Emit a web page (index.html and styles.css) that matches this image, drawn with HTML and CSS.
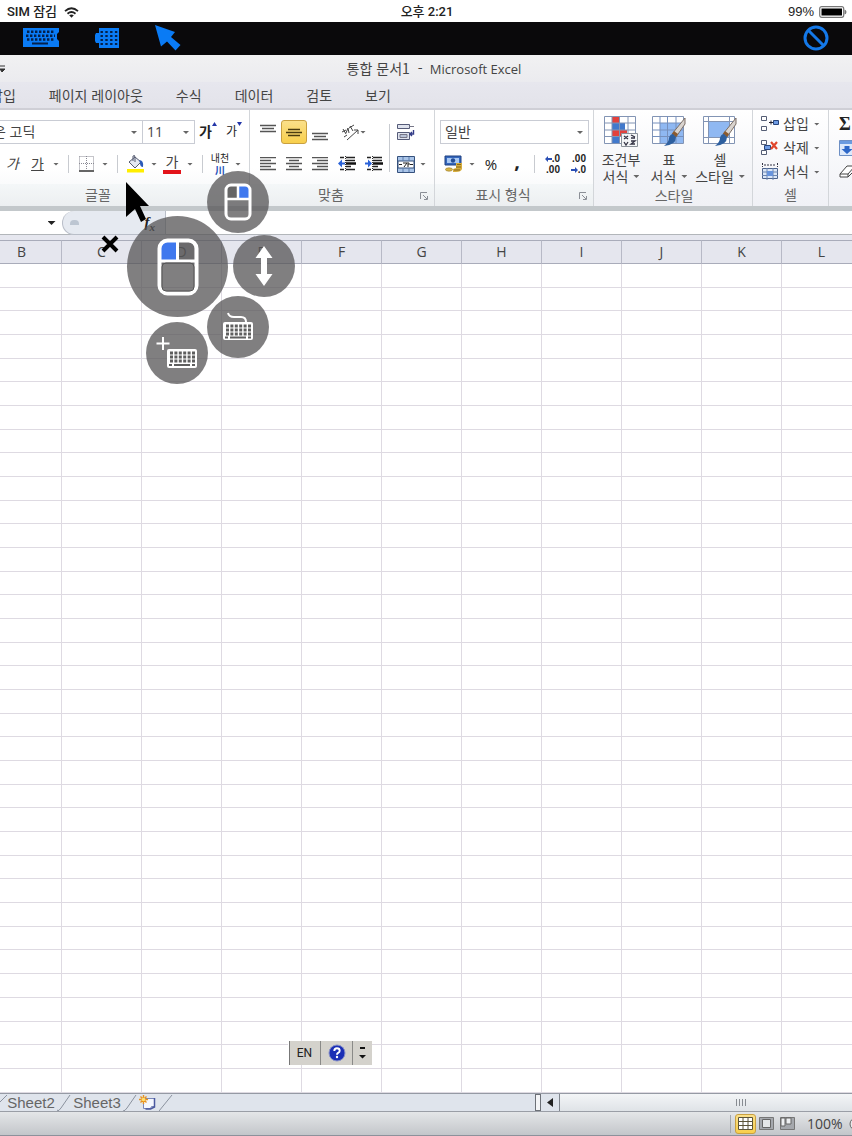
FILE: index.html
```html
<!DOCTYPE html>
<html lang="ko">
<head>
<meta charset="utf-8">
<meta name="viewport" content="width=device-width, initial-scale=1">
<title>통합 문서1 - Microsoft Excel</title>
<link rel="stylesheet" href="styles.css">
</head>
<body>
<header class="device">
  <div class="device-left"><span>SIM 잠김</span>
    <svg width="15" height="11" viewBox="0 0 15 11" fill="none" stroke="#222" stroke-width="1.8"><path d="M1 4.2Q7.500-1.600 14 4.200M3.500 6.700Q7.500 3.200 11.500 6.700"/><path d="M5.200 8.300Q7.500 6.500 9.800 8.300L7.500 10.800Z" fill="#222" stroke="none"/></svg>
  </div>
  <div class="clock">오후 2:21</div>
  <div class="device-right"><span>99%</span>
    <svg width="28" height="12" viewBox="0 0 28 12"><rect x=".7" y=".7" width="24" height="10.600" rx="2" fill="#fff" stroke="#777" stroke-width="1.200"/><rect x="2.500" y="2.500" width="20.500" height="7" fill="#000"/><path d="M25.500 3.500q2 .5 2 2.500t-2 2.500z" fill="#777"/></svg>
  </div>
</header>

<nav class="remote">
  <button aria-label="키보드"><svg width="37" height="21" viewBox="0 0 37 21"><path fill="#0a7bf5" d="M0 1h36v4l-2 2v5l2 2v6H0z"/><path stroke="#04204a" stroke-width="2.400" stroke-dasharray="2.400 1.600" d="M4 4.800h28M3 8.800h29M4 12.500h28"/><path stroke="#04204a" stroke-width="2" d="M9 16.500h16"/></svg></button>
  <button aria-label="숫자 키패드"><svg width="25" height="22" viewBox="0 0 25 22"><path fill="#0a7bf5" d="M4 1h20v20H4v-5H1l-1-2V8l1-2h3z"/><path stroke="#04204a" stroke-width="2.200" stroke-dasharray="2.400 2.400" d="M5.500 5h17M5.500 9h17M5.500 13h17M5.500 17h17"/></svg></button>
  <button aria-label="포인터"><svg width="26" height="26" viewBox="0 0 26 26"><path fill="#0a7bf5" d="M0 0l20 7-4 5 9.500 8-5 5.500-8.500-9-6 5z"/></svg></button>
  <button class="stop" aria-label="중지"><svg width="26" height="26" viewBox="0 0 26 26" fill="none" stroke="#1478e8" stroke-width="3"><circle cx="13" cy="13" r="11"/><path d="M5 5l16 16"/></svg></button>
</nav>

<section class="titlebar">
  <svg class="quick" width="6" height="8" viewBox="0 0 6 8"><path d="M0 1h5M0 4h5L2 7z" stroke="#333" fill="#333"/></svg>
  <h1>통합 문서1 &nbsp;- <span class="latin">&nbsp;Microsoft Excel</span></h1>
</section>
<nav class="tabs">
  <button class="tab cut">삽입</button>
  <button class="tab">페이지 레이아웃</button>
  <button class="tab">수식</button>
  <button class="tab">데이터</button>
  <button class="tab">검토</button>
  <button class="tab">보기</button>
</nav>

<section class="ribbon">
  <div class="group font-group">
    <div class="body">
      <div class="row">
        <label class="combo face"><select aria-label="글꼴"><option>은 고딕</option></select><i class="caret"></i></label>
        <label class="combo size"><select aria-label="글꼴 크기"><option>11</option></select><i class="caret"></i></label>
        <button class="tool grow" aria-label="글꼴 크게"><b>가</b><svg width="5" height="4" viewBox="0 0 5 4"><path d="M0 4L2.500 0 5 4z" fill="#2336a8"/></svg></button>
        <button class="tool shrink" aria-label="글꼴 작게">가<svg width="5" height="4" viewBox="0 0 5 4"><path d="M0 0h5L2.500 4z" fill="#2336a8"/></svg></button>
      </div>
      <div class="row font-tools">
        <button class="tool"><em>가</em></button>
        <button class="tool"><u>가</u></button><i class="caret"></i><i class="sep"></i>
        <button class="tool" aria-label="테두리"><svg width="15" height="16" viewBox="0 0 15 16" fill="none" stroke="#8a8a94"><path stroke-dasharray="1 1" d="M.5.500h14v13M.5.500v13M7.500 0v14M0 7.500h15"/><path stroke="#333" stroke-width="1.500" d="M0 15h15"/></svg></button><i class="caret"></i><i class="sep"></i>
        <button class="tool" aria-label="채우기 색"><svg width="19" height="18" viewBox="0 0 19 18"><path d="M3 7l6-5 6 5-6 6z" fill="#e4e8f2" stroke="#555a70"/><path d="M7 6V1q2-2 2 2v4" fill="none" stroke="#555a70"/><path d="M13 5q5 0 4 7-3 0-3-4z" fill="#2b5ab8"/><path d="M1 14h17v3.500H1z" fill="#ffee00"/></svg></button><i class="caret"></i>
        <button class="tool colour">가</button><i class="caret"></i><i class="sep"></i>
        <button class="tool ruby"><span>내천</span><span class="hanja">川</span></button><i class="caret"></i>
      </div>
    </div>
    <div class="label font-label">글꼴</div>
  </div>

  <div class="group align-group">
    <div class="body split">
      <div class="stack">
        <div class="row align-top">
          <button class="tool" aria-label="위쪽 맞춤"><svg width="16" height="18" viewBox="0 0 16 18" stroke="#555" stroke-width="1.300"><path d="M0 2.500h16M2 5.500h12M0 8.500h16"/></svg></button>
          <button class="tool on" aria-label="가운데 맞춤"><svg width="16" height="18" viewBox="0 0 16 18" stroke="#4c3d10" stroke-width="1.300"><path d="M2 6.500h12M0 9.500h16M2 12.500h12"/></svg></button>
          <button class="tool" aria-label="아래쪽 맞춤"><svg width="16" height="18" viewBox="0 0 16 18" stroke="#555" stroke-width="1.300"><path d="M0 10.500h16M2 13.500h12M0 16.500h16"/></svg></button>
          <button class="tool orient" aria-label="방향"><svg width="19" height="17" viewBox="0 0 19 17" fill="none" stroke="#444"><path d="M6 16L17 6M13 6h4v4M1 8l4-2M2 5l3 5M5 9l2-5M7 4l1 5M8 4l5-3M9 2l3 5M6 11l-3 2"/></svg><i class="caret"></i></button>
        </div>
        <div class="row align-bottom">
          <button class="tool" aria-label="왼쪽"><svg width="16" height="14" viewBox="0 0 16 14" stroke="#555" stroke-width="1.300"><path d="M0 .5h16M0 3.500h11M0 6.500h16M0 9.500h11M0 12.500h16"/></svg></button>
          <button class="tool" aria-label="가운데"><svg width="16" height="14" viewBox="0 0 16 14" stroke="#555" stroke-width="1.300"><path d="M0 .5h16M3 3.500h10M0 6.500h16M3 9.500h10M0 12.500h16"/></svg></button>
          <button class="tool" aria-label="오른쪽"><svg width="16" height="14" viewBox="0 0 16 14" stroke="#555" stroke-width="1.300"><path d="M0 .5h16M5 3.500h11M0 6.500h16M5 9.500h11M0 12.500h16"/></svg></button>
          <button class="tool" aria-label="내어쓰기"><svg width="18" height="16" viewBox="0 0 18 16"><path stroke="#222" stroke-width="1.300" d="M2 1.500h4M8 1.500h9M8 4.500h9M8 10.500h5M2 13.500h4M8 13.500h9"/><path stroke="#111" stroke-width="2.500" d="M8 7.500h10"/><path d="M0 7.500l4-4v3h3v2H4v3z" fill="#2a62d8"/><path stroke="#333" stroke-dasharray="1 1" d="M7.500 0v16"/></svg></button>
          <button class="tool" aria-label="들여쓰기"><svg width="18" height="16" viewBox="0 0 18 16"><path stroke="#222" stroke-width="1.300" d="M2 1.500h4M8 1.500h9M8 4.500h9M8 10.500h5M2 13.500h4M8 13.500h9"/><path stroke="#111" stroke-width="2.500" d="M8 7.500h10"/><path d="M7 7.500l-4-4v3H0v2h3v3z" fill="#2a62d8"/><path stroke="#333" stroke-dasharray="1 1" d="M7.500 0v16"/></svg></button>
        </div>
      </div>
      <i class="sep tall"></i>
      <div class="stack">
        <div class="row wrap-row"><button class="tool" aria-label="텍스트 줄 바꿈"><svg width="18" height="18" viewBox="0 0 18 18"><path d="M.5 1.500h12v4H.5zM.5 9.500h12v7H.5z" fill="#dfe3ee" stroke="#555b78"/><path d="M12 3.500h5M3 11.500h7v3H3z" stroke="#778" fill="#b9c3d8"/><path d="M16.500 7v4h-4M15 9l-2 2 2 2" fill="none" stroke="#333c88" stroke-width="1.400"/></svg></button></div>
        <div class="row wrap-row"><button class="tool" aria-label="병합"><svg width="18" height="17" viewBox="0 0 18 17"><path d="M.5.500h17v16H.5z" fill="#a9c4e8" stroke="#35517d"/><path d="M1 5h16v7H1z" fill="#fff" stroke="#35517d"/><path d="M6 1v4M12 1v4M6 12v4M12 12v4" stroke="#5f7ead"/><path d="M2 8.500h3M13 8.500h3M6 7h4l-3 4M11 6v5M11 8h2" stroke="#222" fill="none"/></svg></button><i class="caret"></i></div>
      </div>
    </div>
    <div class="label">맞춤<button class="launch" aria-label="맞춤 설정"><svg width="8" height="8" viewBox="0 0 8 8" fill="none" stroke="#8b8f96"><path d="M.5 7V.5H7M3 3l4 4M7.500 4v3.500H4"/></svg></button></div>
  </div>

  <div class="group number-group">
    <div class="body">
      <div class="row"><label class="combo"><select aria-label="표시 형식"><option>일반</option></select><i class="caret"></i></label></div>
      <div class="row number-tools">
        <button class="tool" aria-label="회계"><svg width="19" height="18" viewBox="0 0 19 18"><path d="M1 1h16v9H1z" fill="#3567bd" stroke="#1f4180"/><path d="M3 3h12v5H3z" fill="#a9c9f4"/><circle cx="9" cy="5.500" r="2.200" fill="#234c96"/><path d="M12 8h6v6q-1 3-6 3h-3v-3l3-1z" fill="#d6ae3f"/><path d="M13 9.500h4M12 12h5M10 15h6" stroke="#8a6717"/><ellipse cx="5" cy="14.500" rx="3.500" ry="1.700" fill="#d7b548" stroke="#98751e" stroke-width=".6"/></svg></button><i class="caret"></i>
        <button class="tool percent">%</button>
        <button class="tool comma">,</button><i class="sep"></i>
        <button class="tool dec" aria-label="자릿수 늘림"><span><svg width="7" height="6" viewBox="0 0 7 6"><path d="M0 3l3-3v2h4v2H3v2z" fill="#2a4fb5"/></svg>.0</span><span>.00</span></button>
        <button class="tool dec" aria-label="자릿수 줄임"><span>.00</span><span><svg width="7" height="6" viewBox="0 0 7 6"><path d="M7 3L4 0v2H0v2h4v2z" fill="#2a4fb5"/></svg>.0</span></button>
      </div>
    </div>
    <div class="label">표시 형식<button class="launch" aria-label="표시 형식 설정"><svg width="8" height="8" viewBox="0 0 8 8" fill="none" stroke="#8b8f96"><path d="M.5 7V.5H7M3 3l4 4M7.500 4v3.500H4"/></svg></button></div>
  </div>

  <div class="group style-group">
    <div class="body bigs">
      <button class="big"><svg width="34" height="32" viewBox="0 0 34 32"><path d="M.5.500h31v27H.5z" fill="#fff" stroke="#8294b4"/><path d="M8 1h7v20H8z" fill="#e2413c"/><path d="M15 14h8v6h-8z" fill="#e2413c"/><path d="M8 7h13v7H8zM8 20h7v7H8z" fill="#4179cc"/><path d="M0 7h32M0 14h32M0 20.500h32M8 0v28M15.500 0v28M24 0v28" stroke="#8294b4"/><path d="M17.500 17.500h16v13h-16z" fill="#f4f6f8" stroke="#8a9199"/><path d="M20 20l4 3M24 20l-4 3M27 22h4M20 26l2 3 2-3M27 19l4 2M27 25h4l-4 3h4" stroke="#334" stroke-width="1.300" fill="none"/></svg><span>조건부</span><span>서식<i class="caret"></i></span></button>
      <button class="big"><svg width="34" height="32" viewBox="0 0 34 32"><path d="M.5.500h31v27H.5z" fill="#fff" stroke="#8294b4"/><path d="M8 7h23v20H8z" fill="#8fb8f2"/><path d="M0 7h32M0 14h32M0 20.500h32M8 0v28M15.500 0v28M24 0v28" stroke="#7690bd"/><path d="M33 2v6L24 21l-4-3z" fill="#d9d4cf" stroke="#7c6f66"/><path d="M24 21l-4-3 2-3 4 3z" fill="#8b5a2e"/><path d="M24 21q0 8-12 9 5-4 5-8 1-4 4-4z" fill="#2d5f9f"/></svg><span>표</span><span>서식<i class="caret"></i></span></button>
      <button class="big"><svg width="34" height="32" viewBox="0 0 34 32"><path d="M.5.500h31v27H.5z" fill="#fff" stroke="#8294b4"/><path d="M6 6h21v15H6z" fill="#8fb8f2"/><path d="M0 5.500h32M0 21.500h32M5.500 0v28M26.500 0v28" stroke="#8294b4"/><path d="M33 2v6L24 21l-4-3z" fill="#d9d4cf" stroke="#7c6f66"/><path d="M24 21l-4-3 2-3 4 3z" fill="#8b5a2e"/><path d="M24 21q0 8-12 9 5-4 5-8 1-4 4-4z" fill="#2d5f9f"/></svg><span>셀</span><span>스타일<i class="caret"></i></span></button>
    </div>
    <div class="label plain">스타일</div>
  </div>

  <div class="group cell-group">
    <div class="body lines">
      <button class="line"><svg width="18" height="16" viewBox="0 0 18 16"><path d="M.5.500h5v4h-5zM.5 10.500h5v4h-5z" fill="#fff" stroke="#555e75"/><path d="M8 6.500h4M10 4.500v4" stroke="#223"/><path d="M12.500 4.500h5v4h-5z" fill="#6e9be3" stroke="#26447c"/></svg><span>삽입</span><i class="caret"></i></button>
      <button class="line"><svg width="18" height="16" viewBox="0 0 18 16"><path d="M.5.500h5v4h-5zM.5 10.500h5v4h-5z" fill="#fff" stroke="#555e75"/><path d="M3.500 5.500h6v4h-6z" fill="#6e9be3" stroke="#26447c"/><path d="M10 2l6 7M16 2l-6 7" stroke="#e0452c" stroke-width="2.200"/></svg><span>삭제</span><i class="caret"></i></button>
      <button class="line"><svg width="18" height="18" viewBox="0 0 18 18"><path d="M1.500 5.500h15v10h-15z" fill="#dbe7f8" stroke="#4c638c"/><path d="M1 9h16M1 12.500h16M6 5v12M12 5v12" stroke="#6d86b0"/><path d="M6 8h6v5H6z" fill="#6894dd"/><path d="M1.500 0v4M16.500 0v4M3 2h12" stroke="#334" stroke-dasharray="2 1"/></svg><span>서식</span><i class="caret"></i></button>
    </div>
    <div class="label plain">셀</div>
  </div>

  <div class="group edit-group">
    <div class="body lines">
      <button class="line sigma">Σ</button>
      <button class="line" aria-label="채우기"><svg width="16" height="16" viewBox="0 0 16 16"><path d="M.5.500h15v15H.5z" fill="#dce9fb" stroke="#6d8fc4"/><path d="M1 1h14v3H1z" fill="#6a9be0"/><path d="M5.500 6h5v3h3L8 14 2.500 9h3z" fill="#2c67c8"/></svg></button>
      <button class="line" aria-label="지우기"><svg width="18" height="14" viewBox="0 0 18 14"><path d="M1 9l7-8h8l-7 8zM1 9v3h8V9M9 12l8-8V1" fill="#fff" stroke="#444"/></svg></button>
    </div>
  </div>
</section>

<section class="formula">
  <button class="name-arrow" aria-label="이름 상자"><i class="caret dark"></i></button>
  <div class="pill"><i class="knob"></i><button class="fx" aria-label="함수 삽입">f<sub>x</sub></button></div>
  <input class="entry" type="text" aria-label="수식 입력줄">
</section>

<main class="sheet">
  <table class="cells">
    <thead><tr><th>B</th><th>C</th><th>D</th><th>E</th><th>F</th><th>G</th><th>H</th><th>I</th><th>J</th><th>K</th><th>L</th></tr></thead>
    <tbody id="rows"></tbody>
  </table>
  <div class="lang">
    <button class="en">EN</button>
    <button aria-label="도움말"><svg width="18" height="18" viewBox="0 0 18 18"><circle cx="9" cy="9" r="8" fill="#1b2fb5" stroke="#8790c8"/><path d="M6.300 7q0-2.700 2.700-2.700T11.700 6.800q0 1.300-1.600 2.100-1.100.6-1.100 1.800" fill="none" stroke="#fff" stroke-width="1.900"/><circle cx="9" cy="13" r="1.200" fill="#fff"/></svg></button>
    <button class="lang-menu" aria-label="옵션"><svg width="7" height="14" viewBox="0 0 7 14"><path d="M1 1h5v2H1zM0 9h7l-3.500 3.500z" fill="#111"/></svg></button>
  </div>
</main>

<footer class="bottom">
  <div class="sheets">
    <svg class="slant first" width="8" height="18" viewBox="0 0 8 18"><path d="M0 8L7 1"/></svg>
    <button class="sheet-tab">Sheet2</button>
    <svg class="slant" width="14" height="18" viewBox="0 0 14 18"><path d="M0 17q2 0 4-3L13 1M0 17L-1 12"/></svg>
    <button class="sheet-tab">Sheet3</button>
    <svg class="slant" width="14" height="18" viewBox="0 0 14 18"><path d="M0 17q2 0 4-3L13 1"/></svg>
    <button class="sheet-new" aria-label="시트 삽입"><svg width="18" height="15" viewBox="0 0 18 15"><path d="M4.500 3.500h11v8h-3l-1 2h-7z" fill="#f4f7ff" stroke="#7a86b8"/><path d="M15.500 3v9l-4 2h-5" fill="none" stroke="#4a58a0" stroke-width="1.500"/><path d="M4.500 0v9M0 4.500h9M1.500 1.500l6 6M7.500 1.500l-6 6" stroke="#e8921e" stroke-width="1.400"/><circle cx="4.500" cy="4.500" r="1.800" fill="#ffe070"/></svg></button>
    <svg class="slant" width="14" height="18" viewBox="0 0 14 18"><path d="M0 17L13 1"/></svg>
  </div>
  <div class="hscroll">
    <i class="splitter"></i>
    <button class="left" aria-label="왼쪽으로"><svg width="6" height="9" viewBox="0 0 6 9"><path d="M6 0v9L0 4.500z" fill="#222"/></svg></button>
    <div class="thumb"><svg width="10" height="7" viewBox="0 0 10 7" stroke="#888c92"><path d="M.5 0v7M3.500 0v7M6.500 0v7M9.500 0v7"/></svg></div>
  </div>
</footer>
<div class="statusbar">
  <i class="status-sep"></i>
  <button class="view on" aria-label="기본"><svg width="15" height="13" viewBox="0 0 15 13"><path d="M.5.500h14v12H.5zM0 4.500h15M0 8.500h15M5 0v13M10 0v13" fill="#fff" stroke="#5b5338"/></svg></button>
  <button class="view" aria-label="페이지 레이아웃"><svg width="15" height="13" viewBox="0 0 15 13"><path d="M.5.500h14v12H.5z" fill="#a5a8ad" stroke="#777"/><path d="M3.500 2.500h8v8h-8z" fill="#e4e6e8" stroke="#666"/></svg></button>
  <button class="view" aria-label="페이지 나누기"><svg width="15" height="13" viewBox="0 0 15 13"><path d="M.5.500h14v12H.5z" fill="#a5a8ad" stroke="#777"/><path d="M1 1h4v8H1zM6 1h5v6H6z" fill="#eef0f2" stroke="#666"/></svg></button>
  <button class="zoom">100%</button>
  <svg class="minus" width="3" height="14" viewBox="0 0 3 14"><circle cx="7" cy="7" r="6" fill="#e8eaec" stroke="#666"/></svg>
</div>

<div class="overlay">
  <svg class="cursor" width="26" height="42" viewBox="0 0 26 42"><path d="M0 0l23 24H14l6 13-5 3-6-13-9 8z" fill="#000"/></svg>
  <button class="orb right-click" aria-label="오른쪽 클릭"><svg width="28" height="38" viewBox="0 0 28 38"><path d="M3 17V6q0-3 3-3h7v14z" fill="#666"/><path d="M15 3h7q3 0 3 3v11H15z" fill="#3f78ee"/><rect x="2" y="2" width="24" height="34" rx="5" fill="none" stroke="#fff" stroke-width="3"/><path d="M2 16h24M14 2v14" stroke="#fff" stroke-width="2.500"/></svg></button>
  <button class="orb main-click" aria-label="왼쪽 클릭"><svg width="42" height="58" viewBox="0 0 42 58"><path d="M4 22V10q0-6 6-6h9v18z" fill="#3f78ee"/><path d="M22 4h9q6 0 6 6v12H22z" fill="#555" opacity=".4"/><rect x="2.500" y="2.500" width="37" height="53" rx="8" fill="none" stroke="#fff" stroke-width="4"/><path d="M3 23h36M20.500 3v20" stroke="#fff" stroke-width="3"/><rect x="5" y="25" width="32" height="28" rx="4" fill="none" stroke="#555"/></svg></button>
  <button class="orb scroll" aria-label="스크롤"><svg width="18" height="40" viewBox="0 0 18 40"><path d="M9 0l8.500 12H12v16h5.500L9 40 .5 28H6V12H.5z" fill="#fff"/></svg></button>
  <button class="orb keys" aria-label="키보드 열기"><svg width="32" height="30" viewBox="0 0 32 30"><path d="M6 1q1 4 6 4h7q5 0 5 5" fill="none" stroke="#fff" stroke-width="2"/><rect x="1" y="10" width="30" height="18" rx="2" fill="#fff"/><path d="M4 14h25M4 18h25M4 22h25" stroke="#5e5e5e" stroke-width="2.800" stroke-dasharray="3 1.400"/><path d="M3 25.500h3M8 25.500h16M26 25.500h3" stroke="#5e5e5e" stroke-width="2"/></svg></button>
  <button class="orb add-keys" aria-label="키 추가"><svg width="42" height="32" viewBox="0 0 42 32"><path d="M7 0v13M.5 6.500h13" stroke="#fff" stroke-width="2"/><rect x="11" y="12" width="30" height="19" rx="2" fill="#fff"/><path d="M14 16h25M14 20h25M14 24h25" stroke="#5e5e5e" stroke-width="2.800" stroke-dasharray="3 1.400"/><path d="M13 28h3M18 28h16M36 28h3" stroke="#5e5e5e" stroke-width="2"/></svg></button>
  <button class="close" aria-label="닫기"><svg width="18" height="18" viewBox="0 0 18 18"><path d="M2 2l14 14M16 2L2 16" stroke="#000" stroke-width="4"/></svg></button>
</div>
<script src="script.js"></script>
</body>
</html>
```
FILE: styles.css
```css
* { box-sizing: border-box; }
html, body { height: 100%; }
body {
  margin: 0;
  display: flex;
  flex-direction: column;
  position: relative;
  overflow: hidden;
  background: #fff;
  color: #444;
  font: 14px/20px "Open Sans", "Noto Sans CJK KR", sans-serif;
}
button, select, input {
  font: inherit;
  color: inherit;
  background: none;
  border: 0;
  padding: 0;
  margin: 0;
  border-radius: 0;
  appearance: none;
}
svg { display: block; flex: none; }
.latin { font-family: "Open Sans", sans-serif; font-size: 13px; }

/* device status line */
.device {
  display: grid;
  grid-template-columns: 1fr auto 1fr;
  align-items: center;
  height: 22px;
  padding: 2px 5px 0 7px;
  font: 500 13px/20px Roboto, "Noto Sans CJK KR", sans-serif;
  color: #222;
}
.device-left, .device-right { display: flex; align-items: center; gap: 7px; }
.device-right { justify-content: flex-end; gap: 5px; font-family: "Liberation Sans", sans-serif; }

/* remote-control bar */
.remote {
  display: flex;
  align-items: center;
  height: 33px;
  padding: 0 23px 2px;
  gap: 35px;
  background: #0a090b;
}
.remote .stop { margin-left: auto; }

/* window title and ribbon tabs */
.titlebar {
  display: flex;
  align-items: center;
  height: 27px;
  background: linear-gradient(#f1f1f2, #ebebef);
}
.titlebar h1 { flex: 1; margin: 0 0 0 10px; text-align: center; font-size: 14px; font-weight: 400; font-family: "Noto Sans CJK KR", sans-serif; }
.tabs {
  display: flex;
  align-items: center;
  height: 28px;
  gap: 33px;
  background: linear-gradient(#e7e7ee, #e3e3ea);
  border-bottom: 2px solid #cfcfd6;
}
.tab { white-space: nowrap; font-family: "Noto Sans CJK KR", sans-serif; }
.tab.cut { margin-left: -10px; }

/* ribbon */
.ribbon { display: flex; height: 96px; background: linear-gradient(#fff 60%, #f3f5f7); }
.group { display: flex; flex-direction: column; flex: none; border-right: 1px solid #d3d6da; overflow: hidden; }
.body { flex: 1; padding-top: 10px; }
.row { display: flex; align-items: center; height: 24px; }
.row + .row { margin-top: 8px; }
.label {
  position: relative;
  height: 22px;
  padding-right: 22px;
  text-align: center;
  font-size: 14px;
  line-height: 22px;
  color: #666;
  background: linear-gradient(#f4f7f8, #eceff1);
}
.label.plain { padding-right: 0; background: none; }
.launch { position: absolute; right: 6px; top: 8px; }
.tool { display: flex; align-items: center; justify-content: center; height: 24px; line-height: 20px; }
.caret { display: block; width: 6px; height: 3px; margin: auto; background: #666; clip-path: polygon(0 0, 100% 0, 50% 100%); }
.caret.dark { width: 8px; height: 4px; background: #222; }
.sep { width: 1px; height: 18px; margin: auto; background: #c8cbd0; }
.sep.tall { height: 48px; margin: 4px 2px; }

.combo { display: flex; align-items: center; position: relative; height: 24px; border: 1px solid #c9ccd4; background: #fff; }
.combo select { width: 100%; padding: 0 4px; height: 22px; }
.combo .caret { position: absolute; right: 5px; top: 10px; }

.font-group { width: 250px; }
.face { width: 155px; margin-left: -12px; }
.size { width: 53px; margin-left: -1px; }
.grow, .shrink { width: 26px; color: #222; align-items: flex-start; padding-top: 2px; }
.shrink { font-size: 12px; }
.font-tools { display: grid; grid-template-columns: 25px 25px 12px 12px 25px 12px 12px 25px 12px 24px 12px 12px 24px 12px; }
.font-tools em { font-style: oblique; }
.colour { height: 20px; margin: 0 3px; border-bottom: 4px solid #e3141b; line-height: 16px; }
.ruby { flex-direction: column; font-size: 10px; line-height: 12px; color: #222; }
.ruby .hanja { color: #2450b8; font-weight: 700; }
.font-label { padding-right: 53px; }

.align-group { width: 185px; padding-left: 5px; }
.align-group .label { margin-left: -5px; }
.split { display: flex; }
.align-top { display: grid; grid-template-columns: 26px 26px 26px 54px; }
.align-bottom { display: grid; grid-template-columns: 26px 26px 26px 28px 26px; }
.on { background: linear-gradient(#fbe08a, #f8cf4c); border: 1px solid #c9a040; border-radius: 3px; }
.orient { justify-content: flex-start; padding-left: 8px; }
.orient .caret { margin: 0; }
.wrap-row .tool { width: 28px; }

.number-group { width: 159px; padding-left: 5px; }
.number-group .label { margin-left: -5px; }
.number-group .combo { width: 149px; }
.number-tools { display: grid; grid-template-columns: 26px 12px 26px 26px 8px 26px 26px; color: #222; }
.percent { font-size: 15px; }
.comma { font-size: 20px; font-weight: 700; padding-bottom: 6px; }
.dec { flex-direction: column; align-items: flex-end; padding-right: 4px; font: 700 10px/10px "Liberation Sans", sans-serif; }
.dec span { display: flex; align-items: center; height: 11px; }

.style-group { width: 159px; padding-left: 2px; background: linear-gradient(#fff, #f4f5f8 60%, #f0f1f5); }
.bigs { display: grid; grid-template-columns: 50px 46px 56px; padding-top: 6px; }
.big { display: flex; flex-direction: column; align-items: center; font-size: 14px; line-height: 17px; white-space: nowrap; }
.big svg { margin-bottom: 3px; }
.big span { display: flex; align-items: center; gap: 5px; }

.cell-group { width: 76px; background: linear-gradient(#fff, #f0f1f6); }
.lines { padding: 2px 0 0 8px; }
.line { display: flex; align-items: center; height: 24px; gap: 4px; font-size: 14px; }
.line .caret { margin: 0 0 0 1px; }
.edit-group { flex: 1; border: 0; background: linear-gradient(#fff, #f0f1f6); }
.edit-group .lines { padding-left: 10px; }
.sigma { font: 700 18px/20px "Liberation Serif", serif; color: #222; }

/* formula bar */
.formula {
  display: flex;
  height: 34px;
  border-top: 5px solid #c3c8cb;
  border-bottom: 5px solid #e6e7ef;
  box-shadow: inset 0 -1px #b2b6ba;
}
.name-arrow { width: 62px; padding-left: 41px; }
.pill { display: flex; align-items: center; justify-content: space-between; width: 104px; padding: 0 10px 0 7px; background: #e6eaf1; border: 1px solid #b9bec8; border-top: 0; border-radius: 12px 0 0 12px; }
.knob { width: 9px; height: 5px; border-radius: 4px 4px 0 0; background: #bdc6d2; }
.fx { font: italic 700 15px/18px "Liberation Serif", serif; color: #222; }
.fx sub { font-size: 11px; line-height: 10px; }
.entry { flex: 1; min-width: 0; }

/* worksheet */
.sheet { position: relative; flex: 1; min-height: 0; overflow: hidden; }
.cells { width: 880px; min-width: 103%; height: 100%; margin-left: -18px; table-layout: fixed; border-collapse: separate; border-spacing: 0; }
.cells th { height: 24px; padding: 0; font-weight: 400; line-height: 20px; background: #e5e6ee; border-right: 1px solid #b7b9c6; border-top: 1px solid #a9acba; border-bottom: 1px solid #a9acba; }
.cells td { padding: 0; border-right: 1px solid #dedae2; border-bottom: 1px solid #dedae2; }

.lang { position: absolute; left: 288px; bottom: 28px; display: flex; height: 24px; background: #d4d2cc; border-left: 1px solid #fff; box-shadow: inset 1px 0 #777; }
.lang button { display: flex; align-items: center; justify-content: center; width: 32px; border-right: 1px solid #8a8a88; }
.lang .en { font: 12px/20px Roboto, sans-serif; color: #222; }
.lang .lang-menu { width: 19px; border: 0; }

/* sheet tabs and horizontal scroll */
.bottom { display: grid; grid-template-columns: 535fr 317fr; height: 19px; border-top: 1px solid #959aa4; border-bottom: 1px solid #9a9ea6; background: #dfe4ec; }
.sheets { display: flex; align-items: center; overflow: hidden; }
.slant { fill: none; stroke: #8b929e; }
.slant.first { margin-right: -3px; }
.sheet-tab { width: 52px; font: 15px/17px "Liberation Sans", sans-serif; color: #666; }
.sheet-new { width: 22px; padding-left: 2px; }
.hscroll { display: flex; align-items: stretch; }
.splitter { width: 6px; border: 1px solid #6d7178; background: #f4f5f7; }
.left { width: 18px; padding-left: 6px; }
.thumb { flex: 1; display: flex; align-items: center; justify-content: center; padding-left: 70px; border-left: 1px solid #7f848c; background: linear-gradient(#f3f5f7, #dfe3e7); }

/* status bar */
.statusbar { display: flex; align-items: center; justify-content: flex-end; height: 24px; overflow: hidden; background: linear-gradient(#e4e6e8, #c3c6ca); border-bottom: 1px solid #8d919b; }
.status-sep { width: 1px; height: 18px; margin-right: 4px; background: #a4a7ac; }
.view { display: flex; align-items: center; justify-content: center; width: 21px; height: 20px; }
.zoom { width: 40px; padding-left: 2px; margin: 0 4px 0 7px; font-size: 14px; text-align: left; }

/* floating mouse controls */
.overlay { position: absolute; left: 0; top: 0; }
.cursor, .orb, .close { position: absolute; }
.cursor { left: 126px; top: 182px; }
.orb { display: flex; align-items: center; justify-content: center; width: 62px; height: 62px; border-radius: 50%; background: rgba(86, 84, 85, .75); }
.right-click { left: 207px; top: 171px; }
.main-click { left: 127px; top: 216px; width: 101px; height: 101px; }
.scroll { left: 233px; top: 235px; }
.keys { left: 207px; top: 296px; }
.add-keys { left: 146px; top: 322px; }
.close { left: 101px; top: 235px; }
```
FILE: script.js
```js
const body = document.getElementById("rows");
for (let r = 0; r < 35; r++) {
  const row = body.insertRow();
  for (let c = 0; c < 11; c++) row.insertCell();
}
```
